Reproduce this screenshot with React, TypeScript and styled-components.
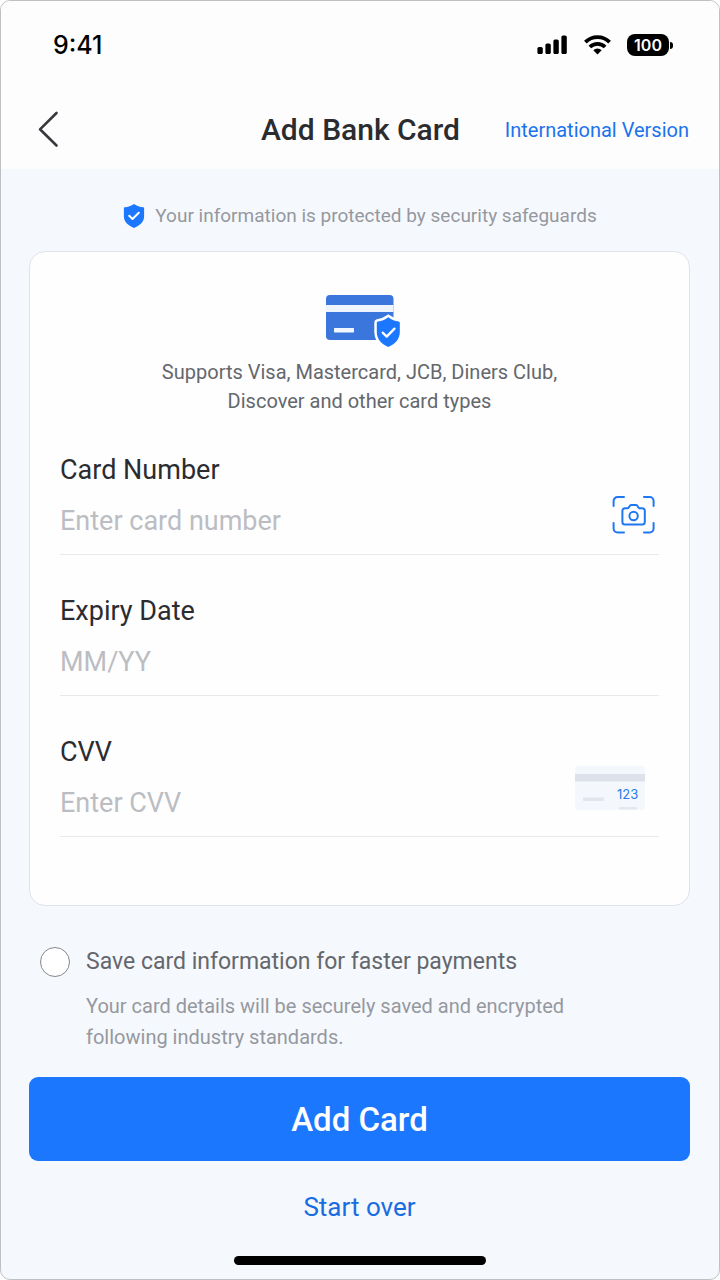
import React, { useState } from "react";
import styled, { createGlobalStyle } from "styled-components";

const GlobalStyle = createGlobalStyle`
  *, *::before, *::after { box-sizing: border-box; }
  body {
    margin: 0;
    background: #ffffff;
    font-family: Roboto, "Noto Sans", sans-serif;
    color: #2b2c30;
  }
  button, input { font: inherit; color: inherit; }
`;

const Screen = styled.div`
  display: flex;
  flex-direction: column;
  min-height: 100vh;
  border: 1px solid #bfc0c4;
  border-radius: 10px;
  overflow: hidden;
  background: #f5f8fd;
`;

const StatusBar = styled.div`
  display: flex;
  align-items: center;
  justify-content: space-between;
  height: 88px;
  padding: 0 46px 0 52px;
  background: #fdfdfe;
`;

const Clock = styled.span`
  font-family: Inter, sans-serif;
  font-size: 25px;
  font-weight: 500;
  color: #000000;
`;

const StatusIcons = styled.div`
  display: flex;
  align-items: center;
  gap: 16px;
`;

const Battery = styled.div`
  display: flex;
  align-items: center;
  gap: 1px;
`;

const BatteryBody = styled.span`
  width: 42px;
  border-radius: 8px;
  background: #000000;
  color: #ffffff;
  font-family: Inter, sans-serif;
  font-size: 16px;
  font-weight: 600;
  line-height: 22px;
  text-align: center;
`;

const BatteryTip = styled.span`
  width: 3px;
  height: 7px;
  border-radius: 0 3px 3px 0;
  background: #000000;
`;

const Header = styled.header`
  display: grid;
  grid-template-columns: 1fr auto 1fr;
  align-items: center;
  height: 80px;
  padding: 2px 30px 0 31px;
  background: #fdfdfe;
`;

const IconButton = styled.button`
  display: flex;
  flex: none;
  padding: 0;
  border: 0;
  background: none;
  cursor: pointer;
`;

const Title = styled.h1`
  margin: 0;
  font-size: 30px;
  font-weight: 500;
  line-height: 40px;
`;

const VersionLink = styled.a`
  justify-self: end;
  font-size: 20px;
  line-height: 30px;
  color: #1a73ec;
  text-decoration: none;
  white-space: nowrap;
`;

const Notice = styled.p`
  display: flex;
  align-items: center;
  justify-content: center;
  gap: 10px;
  margin: 0;
  padding: 32px 0 20px;
  font-size: 19px;
  line-height: 30px;
  color: #95989e;
`;

const Content = styled.form`
  display: flex;
  flex-direction: column;
  padding: 0 29px 0 28px;
`;

const CardPanel = styled.section`
  display: flex;
  flex-direction: column;
  padding: 42px 30px 68px;
  border: 1px solid #dfe3ea;
  border-radius: 16px;
  background: #fefeff;
`;

const Brands = styled.div`
  display: flex;
  flex-direction: column;
  align-items: center;
  gap: 10px;
  margin-bottom: 36px;
`;

const BrandText = styled.p`
  margin: 0;
  max-width: 400px;
  font-size: 20px;
  line-height: 29px;
  text-align: center;
  color: #64676c;
`;

const Fields = styled.div`
  display: flex;
  flex-direction: column;
  gap: 38px;
`;

const Field = styled.div`
  display: flex;
  align-items: flex-end;
  border-bottom: 1px solid #e8e9ec;
`;

const FieldText = styled.div`
  display: flex;
  flex: 1;
  flex-direction: column;
  min-width: 0;
`;

const FieldLabel = styled.label`
  font-size: 27px;
  line-height: 36px;
`;

const FieldInput = styled.input`
  width: 100%;
  height: 66px;
  padding: 0;
  border: 0;
  outline: 0;
  background: none;
  font-size: 27px;

  &::placeholder {
    color: #bcbdc2;
    opacity: 1;
  }
`;

const ScanButton = styled(IconButton)`
  padding: 0 3px 19px 0;
`;

const CvvHint = styled.div`
  display: flex;
  padding: 0 13px 25px 0;
`;

const SaveOption = styled.div`
  display: grid;
  grid-template-columns: 30px 1fr;
  column-gap: 16px;
  row-gap: 9px;
  align-items: center;
  padding: 36px 12px 24px 11px;
`;

const SaveCheck = styled.input`
  appearance: none;
  width: 30px;
  height: 30px;
  margin: 0;
  border: 1px solid #85878c;
  border-radius: 50%;
  background: #ffffff;
  cursor: pointer;

  &:checked {
    border: 9px solid #1b77fe;
  }
`;

const SaveLabel = styled.label`
  font-size: 23px;
  line-height: 40px;
  color: #64676c;
`;

const SaveHint = styled.p`
  grid-column: 2;
  margin: 0;
  max-width: 520px;
  font-size: 20px;
  line-height: 31px;
  color: #95989e;
`;

const PrimaryButton = styled.button`
  height: 84px;
  border: 0;
  border-radius: 9px;
  background: #1b77fe;
  color: #ffffff;
  font-size: 33px;
  font-weight: 500;
  cursor: pointer;
`;

const TextButton = styled.button`
  align-self: center;
  margin-top: 26px;
  padding: 0;
  border: 0;
  background: none;
  color: #1a6de0;
  font-size: 26px;
  line-height: 40px;
  cursor: pointer;
`;

const HomeIndicator = styled.div`
  align-self: center;
  width: 35%;
  height: 9px;
  margin: 29px 0 14px;
  border-radius: 5px;
  background: #000000;
`;

const SignalIcon = () => (
  <svg width="30" height="20" viewBox="0 0 30 20" aria-hidden="true">
    <rect x="0.4" y="12" width="5.4" height="7" rx="1.6" />
    <rect x="8.400" y="8.4" width="5.4" height="10.6" rx="1.6" />
    <rect x="16.400" y="4.4" width="5.4" height="14.6" rx="1.6" />
    <rect x="24.400" y="0.4" width="5.4" height="18.6" rx="1.6" />
  </svg>
);

const WifiIcon = () => (
  <svg width="28" height="20" viewBox="0 0 28 20" aria-hidden="true">
    <g fill="none" stroke="#000000" strokeWidth="3.8">
      <path d="M2.400 7.200a17 17 0 0 1 24.200 0" />
      <path d="M6.900 12a10.800 10.800 0 0 1 15.200 0" />
    </g>
    <path d="M14.500 19.600l-4.200-4.300a6 6 0 0 1 8.400 0z" />
  </svg>
);

const BackIcon = () => (
  <svg width="32" height="40" viewBox="0 0 32 40" fill="none" aria-hidden="true">
    <path
      d="M24.500 3L8 19.300L24.500 35.500"
      stroke="#38393c"
      strokeWidth="2.6"
      strokeLinecap="round"
      strokeLinejoin="round"
    />
  </svg>
);

const ShieldIcon = () => (
  <svg width="22" height="26" viewBox="0 0 22 26" aria-hidden="true">
    <path
      d="M11 1c2.600 2 6 3 9.200 3.200.6 0 .9.400.9.900v8.400c0 5.600-4.600 9.300-10.100 11.500C5.500 22.800.9 19.100.9 13.500V5.100c0-.5.3-.9.9-.9C5 4 8.400 3 11 1z"
      fill="#1b77fe"
    />
    <path
      d="M6.200 12.800l3.300 3.200 6.300-6.200"
      fill="none"
      stroke="#ffffff"
      strokeWidth="2"
      strokeLinecap="round"
      strokeLinejoin="round"
    />
  </svg>
);

const BankCardIcon = () => (
  <svg width="80" height="54" viewBox="-2 0 80 54" aria-hidden="true">
    <rect x="4" y="1" width="67.500" height="45" rx="4" fill="#3a76dc" />
    <rect x="4" y="11" width="67.500" height="7" fill="#eef4fd" />
    <rect x="12" y="34" width="20" height="4.400" rx="0.600" fill="#f2f7fe" />
    <g transform="translate(5 0)">
      <path
        d="M61.300 23.300c3.600 2.500 6.400 3.900 10.300 4.300.9.100 1.200.600 1.200 1.400v9.200c0 6.900-4.900 11.900-11.500 14.700-6.600-2.800-11.500-7.800-11.500-14.700v-9.200c0-.8.300-1.300 1.200-1.400 3.900-.4 6.700-1.800 10.300-4.300z"
        fill="#1b77fe"
        stroke="#ffffff"
        strokeWidth="5"
        paintOrder="stroke"
      />
      <path
        d="M55.700 38.600l4 4 7.800-8"
        fill="none"
        stroke="#ffffff"
        strokeWidth="2.300"
        strokeLinecap="round"
        strokeLinejoin="round"
      />
    </g>
  </svg>
);

const ScanCardIcon = () => (
  <svg
    width="44"
    height="40"
    viewBox="0 0 44 40"
    fill="none"
    stroke="#1f77f2"
    strokeWidth="2"
    strokeLinecap="round"
    strokeLinejoin="round"
    aria-hidden="true"
  >
    <path d="M1.600 11V6a4 4 0 0 1 4-4H12M32 2h5.600a4 4 0 0 1 4 4v5M41.600 28v5.500a4 4 0 0 1-4 4H32M12 37.500H5.600a4 4 0 0 1-4-4V28" />
    <path d="M13 13.200h3.200l1.700-2.500c.4-.6.8-.8 1.500-.8h4.400c.7 0 1.100.2 1.500.8l1.700 2.500h3.200a2.600 2.600 0 0 1 2.600 2.600v11.200a2.600 2.600 0 0 1-2.600 2.600H13a2.600 2.600 0 0 1-2.600-2.600V15.800a2.600 2.600 0 0 1 2.600-2.600z" />
    <circle cx="21.600" cy="21" r="4.200" />
  </svg>
);

const CvvCardIcon = () => (
  <svg width="72" height="46" viewBox="0 0 72 46" role="img" aria-label="Security code on the back of the card">
    <rect x="1" y="1" width="70" height="44" rx="3" fill="#f4f7fc" />
    <rect x="1" y="9" width="70" height="7.500" fill="#dde1e9" />
    <rect x="9" y="32.500" width="21" height="3.500" rx="1" fill="#e2e5eb" />
    <rect x="45" y="42" width="18" height="2.500" rx="1" fill="#e4e7ed" />
    <text x="43" y="34" fontSize="13" fontFamily="Inter, sans-serif" fill="#2b7bea">
      123
    </text>
  </svg>
);

export default function App() {
  const [save, setSave] = useState(false);

  return (
    <>
      <GlobalStyle />
      <Screen>
        <StatusBar>
          <Clock>9:41</Clock>
          <StatusIcons>
            <SignalIcon />
            <WifiIcon />
            <Battery>
              <BatteryBody>100</BatteryBody>
              <BatteryTip />
            </Battery>
          </StatusIcons>
        </StatusBar>

        <Header>
          <IconButton type="button" aria-label="Back">
            <BackIcon />
          </IconButton>
          <Title>Add Bank Card</Title>
          <VersionLink href="#international">International Version</VersionLink>
        </Header>

        <Notice>
          <ShieldIcon />
          Your information is protected by security safeguards
        </Notice>

        <Content onSubmit={(e) => e.preventDefault()}>
          <CardPanel>
            <Brands>
              <BankCardIcon />
              <BrandText>
                Supports Visa, Mastercard, JCB, Diners Club, Discover and other card types
              </BrandText>
            </Brands>

            <Fields>
              <Field>
                <FieldText>
                  <FieldLabel htmlFor="card-number">Card Number</FieldLabel>
                  <FieldInput id="card-number" inputMode="numeric" placeholder="Enter card number" />
                </FieldText>
                <ScanButton type="button" aria-label="Scan card">
                  <ScanCardIcon />
                </ScanButton>
              </Field>
              <Field>
                <FieldText>
                  <FieldLabel htmlFor="expiry">Expiry Date</FieldLabel>
                  <FieldInput id="expiry" inputMode="numeric" placeholder="MM/YY" />
                </FieldText>
              </Field>
              <Field>
                <FieldText>
                  <FieldLabel htmlFor="cvv">CVV</FieldLabel>
                  <FieldInput id="cvv" inputMode="numeric" placeholder="Enter CVV" />
                </FieldText>
                <CvvHint>
                  <CvvCardIcon />
                </CvvHint>
              </Field>
            </Fields>
          </CardPanel>

          <SaveOption>
            <SaveCheck
              id="save-card"
              type="checkbox"
              checked={save}
              onChange={(e) => setSave(e.target.checked)}
            />
            <SaveLabel htmlFor="save-card">Save card information for faster payments</SaveLabel>
            <SaveHint>
              Your card details will be securely saved and encrypted following industry standards.
            </SaveHint>
          </SaveOption>

          <PrimaryButton type="submit">Add Card</PrimaryButton>
          <TextButton type="reset" onClick={() => setSave(false)}>
            Start over
          </TextButton>
        </Content>

        <HomeIndicator />
      </Screen>
    </>
  );
}
